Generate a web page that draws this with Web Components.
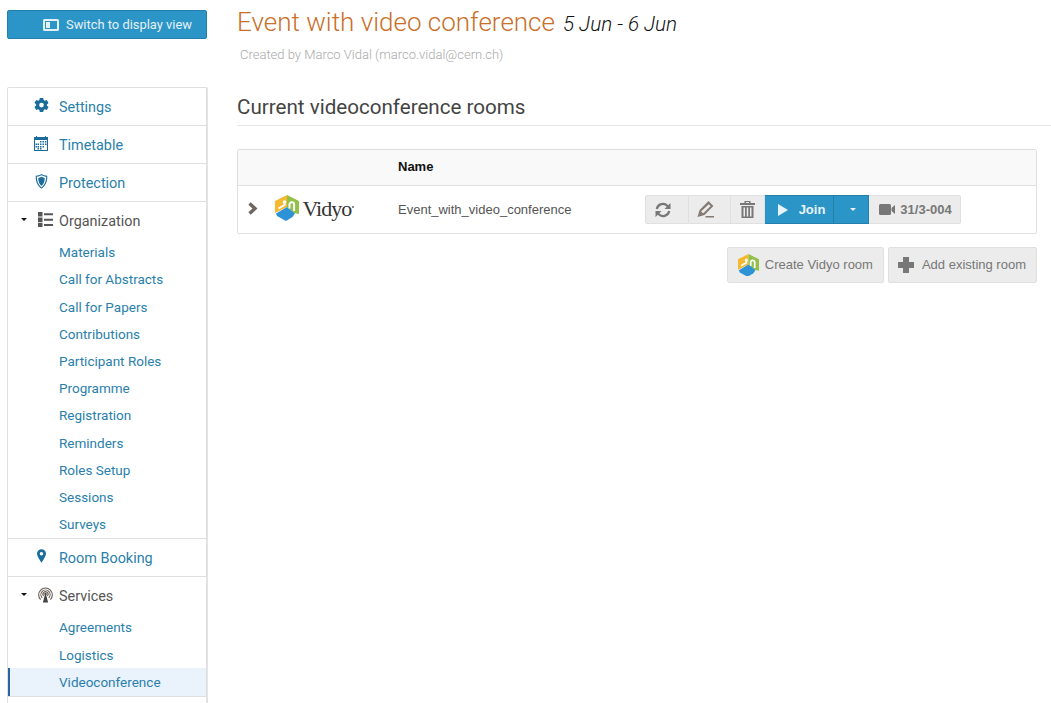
<!DOCTYPE html>
<html>
<head>
<meta charset="utf-8">
<title>Videoconference</title>
<style>
    html, body { margin: 0; padding: 0; height: 703px; overflow: hidden; background: #fff; }
    body { font-family: "Liberation Sans", sans-serif; color: #444; }
</style>
</head>
<body>
<vc-page>
    <vc-sidebar slot="side">
        <vc-display-button>Switch to display view</vc-display-button>
        <vc-menu>
            <vc-menu-item icon="gear">Settings</vc-menu-item>
            <vc-menu-item icon="calendar">Timetable</vc-menu-item>
            <vc-menu-item icon="shield">Protection</vc-menu-item>
            <vc-menu-item icon="list" open>Organization
                <vc-sub-item slot="sub">Materials</vc-sub-item>
                <vc-sub-item slot="sub">Call for Abstracts</vc-sub-item>
                <vc-sub-item slot="sub">Call for Papers</vc-sub-item>
                <vc-sub-item slot="sub">Contributions</vc-sub-item>
                <vc-sub-item slot="sub">Participant Roles</vc-sub-item>
                <vc-sub-item slot="sub">Programme</vc-sub-item>
                <vc-sub-item slot="sub">Registration</vc-sub-item>
                <vc-sub-item slot="sub">Reminders</vc-sub-item>
                <vc-sub-item slot="sub">Roles Setup</vc-sub-item>
                <vc-sub-item slot="sub">Sessions</vc-sub-item>
                <vc-sub-item slot="sub">Surveys</vc-sub-item>
            </vc-menu-item>
            <vc-menu-item icon="pin">Room Booking</vc-menu-item>
            <vc-menu-item icon="antenna" open>Services
                <vc-sub-item slot="sub">Agreements</vc-sub-item>
                <vc-sub-item slot="sub">Logistics</vc-sub-item>
                <vc-sub-item slot="sub" active>Videoconference</vc-sub-item>
            </vc-menu-item>
        </vc-menu>
    </vc-sidebar>
    <vc-main slot="main">
        <vc-title date="5 Jun - 6 Jun" by="Created by Marco Vidal (marco.vidal@cern.ch)">Event with video conference</vc-title>
        <vc-section>Current videoconference rooms</vc-section>
        <vc-room-table></vc-room-table>
        <vc-actions></vc-actions>
    </vc-main>
</vc-page>

<script>
const ICONS = {
    gear: `<svg viewBox="0 0 16 16" width="15" height="15"><path fill="#1a6c9c" fill-rule="evenodd" d="M6.200 0h3.600l.5 2.200 1.200.7 2.200-.7 1.800 3.100-1.700 1.500v1.400l1.700 1.500-1.800 3.100-2.200-.7-1.200.7-.5 2.200H6.200l-.5-2.200-1.200-.7-2.200.7L.5 9.500l1.700-1.500V6.600L.5 5.300l1.800-3.100 2.200.7 1.200-.7zM8 5a2.500 2.500 0 1 0 0 5 2.500 2.500 0 0 0 0-5z"/></svg>`,
    calendar: `<svg viewBox="0 0 14 15" width="14" height="15"><path fill="#1a6c9c" d="M0 1h2V0h1v1h8V0h1v1h2v14H0z"/><path fill="#fff" d="M1 4h12v10H1z"/><path fill="#1a6c9c" d="M6 5h1.500v1.500H6zM8.500 5H10v1.500H8.500zM11 5h1.500v1.500H11zM3.500 7.500H5V9H3.500zM6 7.500h1.500V9H6zM8.500 7.500H10V9H8.500zM11 7.500h1.500V9H11zM1.500 7.500H3V9H1.500zM1.500 10H3v1.500H1.500zM3.500 10H5v1.500H3.500zM6 10h1.500v1.500H6zM8.500 10H10v1.500H8.500zM3.500 12H5v1.500H3.500zM6 12h1.500v1.500H6z"/></svg>`,
    shield: `<svg viewBox="0 0 14 16" width="13" height="15"><path fill="#1a6c9c" fill-rule="evenodd" d="M7 0c1.800 1.200 3.800 1.700 6.200 1.800.3 5.800-1.700 11-6.200 14C2.500 12.800.5 7.600.8 1.800 3.200 1.700 5.200 1.200 7 0zm0 1.300C5.400 2.300 3.700 2.700 1.900 2.900c0 4.600 1.600 8.800 5.100 11.500 3.500-2.700 5.100-6.900 5.100-11.500-1.800-.2-3.500-.6-5.100-1.600z"/><path fill="#1a6c9c" d="M7 3c1.100.6 2.300 1 3.500 1.100 0 3.500-1.100 6.600-3.500 8.600-2.400-2-3.500-5.100-3.500-8.600C4.700 4 5.900 3.600 7 3z"/></svg>`,
    list: `<svg viewBox="0 0 15 15" width="15" height="15"><path fill="#555" d="M0 0h4.500v4.500H0zM0 5.500h4.500V10H0zM0 10.800h4.500v4.200H0zM6 1.200h9v2H6zM6 6.700h9v2H6zM6 12h9v2H6z"/></svg>`,
    pin: `<svg viewBox="0 0 10 15" width="9" height="14" style="margin-top:-2px"><path fill="#1a6c9c" fill-rule="evenodd" d="M5 0a5 5 0 0 1 5 5c0 3-3 6.500-5 10C3 11.500 0 8 0 5a5 5 0 0 1 5-5zm0 3a2 2 0 1 0 0 4 2 2 0 0 0 0-4z"/></svg>`,
    antenna: `<svg viewBox="0 0 16 16" width="15" height="16"><g fill="none" stroke="#6a5f57" stroke-width="1.200"><path d="M4.500 11a4.900 4.900 0 1 1 7 0"/><path d="M2.800 13a7.300 7.300 0 1 1 10.400 0"/><path d="M6 9a2.700 2.700 0 1 1 4 0"/></g><circle cx="8" cy="7" r="1.300" fill="#444"/><path fill="#444" d="M7.300 8h1.400L10.800 16H5.200z"/></svg>`
};

const define = (name, css, html, init) => {
    customElements.define(name, class extends HTMLElement {
        constructor() {
            super();
            this._root = this.attachShadow({mode: 'open'});
        }
        connectedCallback() {
            this._root.innerHTML = `<style>${css}</style>${typeof html === 'function' ? html(this) : html}`;
            if (init) init(this);
        }
    });
};

define('vc-page', `
    :host { display: flex; height: 703px; overflow: hidden; }
    .side { flex: 0 0 200px; margin-left: 7px; }
    .main { flex: 1; min-width: 0; margin-left: 30px; }
`, `<div class="side"><slot name="side"></slot></div><div class="main"><slot name="main"></slot></div>`);

define('vc-sidebar', `
    :host { display: block; padding-top: 10px; }
`, `<slot></slot>`);

define('vc-display-button', `
    :host { display: flex; box-sizing: border-box; height: 29px; align-items: center; padding-left: 35px;
        background: #2c95c7; border: 1px solid #2380ad; border-radius: 2px; color: #e4f1f7;
        font: 12.900px Roboto, sans-serif; }
    svg { margin-right: 7px; }
`, `<svg viewBox="0 0 16 12" width="16" height="12"><path fill="#e4f1f7" fill-rule="evenodd" d="M1.500 0h13A1.500 1.500 0 0 1 16 1.500v9a1.500 1.500 0 0 1-1.500 1.500h-13A1.500 1.500 0 0 1 0 10.500v-9A1.500 1.500 0 0 1 1.500 0zM2 2v8h12V2z"/><path fill="#e4f1f7" d="M3 3h4v6H3z"/></svg><slot></slot>`);

define('vc-menu', `
    :host { display: block; margin-top: 48px; padding-bottom: 30px; background: #fff; border: 1px solid #dfdfdf; border-bottom: 0;
        border-radius: 2px 2px 0 0; box-shadow: 1px 0 0 #e4e4e4; }
`, `<slot></slot>`);

define('vc-menu-item', `
    :host { display: block; border-bottom: 1px solid #dfdfdf; font: 14.400px Roboto, sans-serif; color: #2a7fab; }
    :host([open]) { color: #555; }
    .head { display: flex; align-items: center; height: 37px; box-sizing: border-box; padding-top: 2px; position: relative; }
    .caret { position: absolute; left: 12.500px; top: 16px; width: 0; height: 0;
        border: 3.500px solid transparent; border-top-color: #111; border-bottom: 0; }
    .ico { width: 22px; display: flex; justify-content: center; margin-left: 22px; margin-right: 7px; margin-top: -4px; }
    :host([open]) .ico { position: relative; left: 4px; }
`, (el) => `
    <div class="head">
        ${el.hasAttribute('open') ? '<span class="caret"></span>' : ''}
        <span class="ico">${ICONS[el.getAttribute('icon')]}</span>
        <span><slot></slot></span>
    </div>
    <div class="sub"><slot name="sub"></slot></div>`);

define('vc-sub-item', `
    :host { display: flex; align-items: center; box-sizing: border-box; height: 27.200px; padding: 0 0 .6px 51px;
        font: 13.500px Roboto, sans-serif; color: #2a7fab; }
    :host([active]) { background: #eaf2fb; border-left: 2px solid #2a64a0; padding-left: 49px; }
`, `<slot></slot>`);

define('vc-main', `
    :host { display: block; }
`, `<slot></slot>`);

define('vc-title', `
    :host { display: block; }
    .line { display: flex; align-items: baseline; height: 47px; padding-top: 7px; box-sizing: border-box; }
    h1 { margin: 0; font: 300 26px Roboto, sans-serif; color: #c96f2a; }
    .date { margin-left: 8px; font: italic 300 20.700px Roboto, sans-serif; color: #111; }
    .by { margin-left: 3px; font: 300 13px Roboto, sans-serif; color: #aaa; height: 15px; line-height: 15px; }
`, (el) => `
    <div class="line"><h1><slot></slot></h1><span class="date">${el.getAttribute('date')}</span></div>
    <div class="by">${el.getAttribute('by')}</div>`);

define('vc-section', `
    :host { display: block; margin-top: 30px; height: 34px; box-sizing: border-box; border-bottom: 1px solid #e6e6e6; }
    h2 { margin: 0; font: 400 20.600px/30px Roboto, sans-serif; color: #444; }
`, `<h2><slot></slot></h2>`);

define('vc-logo', `
    :host { display: inline-flex; }
`, (el) => {
    const w = +el.getAttribute('size') || 24;
    return `<svg viewBox="0 0 24 26" width="${w}" height="${w * 26 / 24}">
    <path fill="#f5b82e" d="M12 0 0 6v12l12-6z"/>
    <path fill="#93c047" d="M12 0l12 6v13l-5-1-7-6z"/>
    <path fill="#2e93d6" d="M1 18.500 12 12l8 6.500-2.500 3.500L11 26l-9-5z"/>
    <circle cx="9.500" cy="7" r="1.800" fill="#fff"/>
    <path fill="none" stroke="#fff" stroke-width="2" d="M3.500 13.500 9.500 10V7"/>
    <path fill="none" stroke="#fff" stroke-width="2" d="M14.500 13.500V9.500a2.300 2.300 0 0 1 4.600 0V16"/>
</svg>`;
});

define('vc-tool', `
    :host { display: flex; align-items: center; justify-content: center; box-sizing: border-box; height: 29px;
        background: #ececec; border: 1px solid #e0e0e0; border-left: 0; color: #777;
        font: bold 13px "Liberation Sans", sans-serif; }
    :host([first]) { border-left: 1px solid #e0e0e0; border-radius: 2px 0 0 2px; }
    :host([last]) { border-radius: 0 2px 2px 0; }
    :host([blue]) { background: #2c95c7; border: 1px solid #2380ad; border-left: 0; color: #e8f4fa; }
`, `<slot></slot>`);

define('vc-room-table', `
    :host { display: block; width: 800px; margin-top: 23px; box-sizing: border-box; border: 1px solid #dfdfdf;
        border-radius: 2px; font: 13px "Liberation Sans", sans-serif; color: #555; }
    .head { display: flex; align-items: center; height: 33px; padding-bottom: 2px; background: #f9f9f9; border-bottom: 1px solid #dfdfdf;
        font-weight: bold; color: #111; padding-left: 160px; }
    .row { display: flex; align-items: center; height: 47px; }
    .chev { margin-left: 10px; width: 10px; display: flex; margin-top: -3px; }
    .logo { margin-left: 17px; width: 123px; display: flex; align-items: center; gap: 3.500px; margin-top: -4px; }
    .word { font: 22px "Liberation Serif", serif; color: #333; letter-spacing: -1px; margin-top: 3px; }
    .dot { width: 2px; height: 2px; border-radius: 50%; background: #666; margin: -1px 0 0 -3px; }
    .name { width: 247px; }
    .tools { display: flex; }
    .tools vc-tool:nth-child(1) { width: 44px; padding-right: 8px; }
    .tools vc-tool:nth-child(2) { width: 42px; padding-right: 8px; }
    .tools vc-tool:nth-child(3) { width: 34px; }
    .tools vc-tool:nth-child(4) { width: 69px; padding-left: 4px; }
    .tools vc-tool:nth-child(5) { width: 35px; padding-left: 4px; }
    .tools vc-tool:nth-child(6) { width: 92px; padding-left: 2px; }
`, `
    <div class="head">Name</div>
    <div class="row">
        <span class="chev"><svg viewBox="0 0 10 13" width="10" height="13"><path fill="none" stroke="#6e6660" stroke-width="3.400" d="M1.500 1.500 7 6.500 1.500 11.500"/></svg></span>
        <span class="logo"><vc-logo size="24"></vc-logo><span class="word">Vidyo</span><span class="dot"></span></span>
        <span class="name">Event_with_video_conference</span>
        <span class="tools">
            <vc-tool first><svg viewBox="0 0 16 16" width="16" height="16"><g fill="none" stroke="#777" stroke-width="2.200"><path d="M1.800 7a6.200 6.200 0 0 1 10.700-3L14 5.500"/><path d="M14.200 9a6.200 6.200 0 0 1-10.700 3L2 10.500"/></g><path fill="#777" d="M15.500 1v6h-6zM.5 15V9h6z"/></svg></vc-tool>
            <vc-tool><svg viewBox="0 0 17 17" width="17" height="17"><path fill="#ececec" stroke="#857a74" stroke-width="2" d="M11.500 1.500l3.500 3.500-8 8-5 1.500 1.500-5z"/><path fill="#857a74" d="M3 9.500l4.500 4-5.500 1.500zM4.500 8 11 2l1 1-6.500 6zM8.500 15h8.500v1.500H8.500z"/></svg></vc-tool>
            <vc-tool><svg viewBox="0 0 15 17" width="15" height="17"><path fill="#777" fill-rule="evenodd" d="M0 2h4.500V0h6v2H15v2H0zM6 1v1h3V1zM1.500 5h12v12h-12zM3.500 6.500V15.500H5V6.500zM6.750 6.500V15.500h1.500V6.500zM10 6.500V15.500h1.500V6.500z"/></svg></vc-tool>
            <vc-tool blue><svg viewBox="0 0 11 12" width="11" height="12" style="margin-right:11px"><path fill="#e8f4fa" d="M1 0l10 6-10 6z"/></svg>Join</vc-tool>
            <vc-tool blue><span style="width:0;height:0;border:3px solid transparent;border-top-color:#e8f4fa;border-bottom:0"></span></vc-tool>
            <vc-tool last><svg viewBox="0 0 16 11" width="16" height="11" style="margin-right:5px"><path fill="#777" d="M1.500 0h9A1.500 1.500 0 0 1 12 1.500v8A1.500 1.500 0 0 1 10.500 11h-9A1.500 1.500 0 0 1 0 9.500v-8A1.500 1.500 0 0 1 1.500 0zM12.500 4 16 1v9l-3.500-3z"/></svg>31/3-004</vc-tool>
        </span>
    </div>`);

define('vc-action', `
    :host { display: flex; align-items: center; box-sizing: border-box; height: 36px; padding: 0 10px 2px 9px;
        background: #ececec; border: 1px solid #e0e0e0; border-radius: 2px; color: #777;
        font: 13px "Liberation Sans", sans-serif; }
`, `<slot></slot>`);

define('vc-actions', `
    :host { display: flex; justify-content: flex-end; gap: 4px; width: 800px; margin-top: 13px; }
`, `
    <vc-action style="padding-left:10px"><vc-logo size="21" style="margin:2px 6px 0 0"></vc-logo>Create Vidyo room</vc-action>
    <vc-action><svg viewBox="0 0 16 16" width="16" height="16" style="margin:1px 8px 0 0"><path fill="#777" d="M5 0h6v5h5v6h-5v5H5v-5H0V5h5z"/></svg>Add existing room</vc-action>`);
</script>
</body>
</html>
